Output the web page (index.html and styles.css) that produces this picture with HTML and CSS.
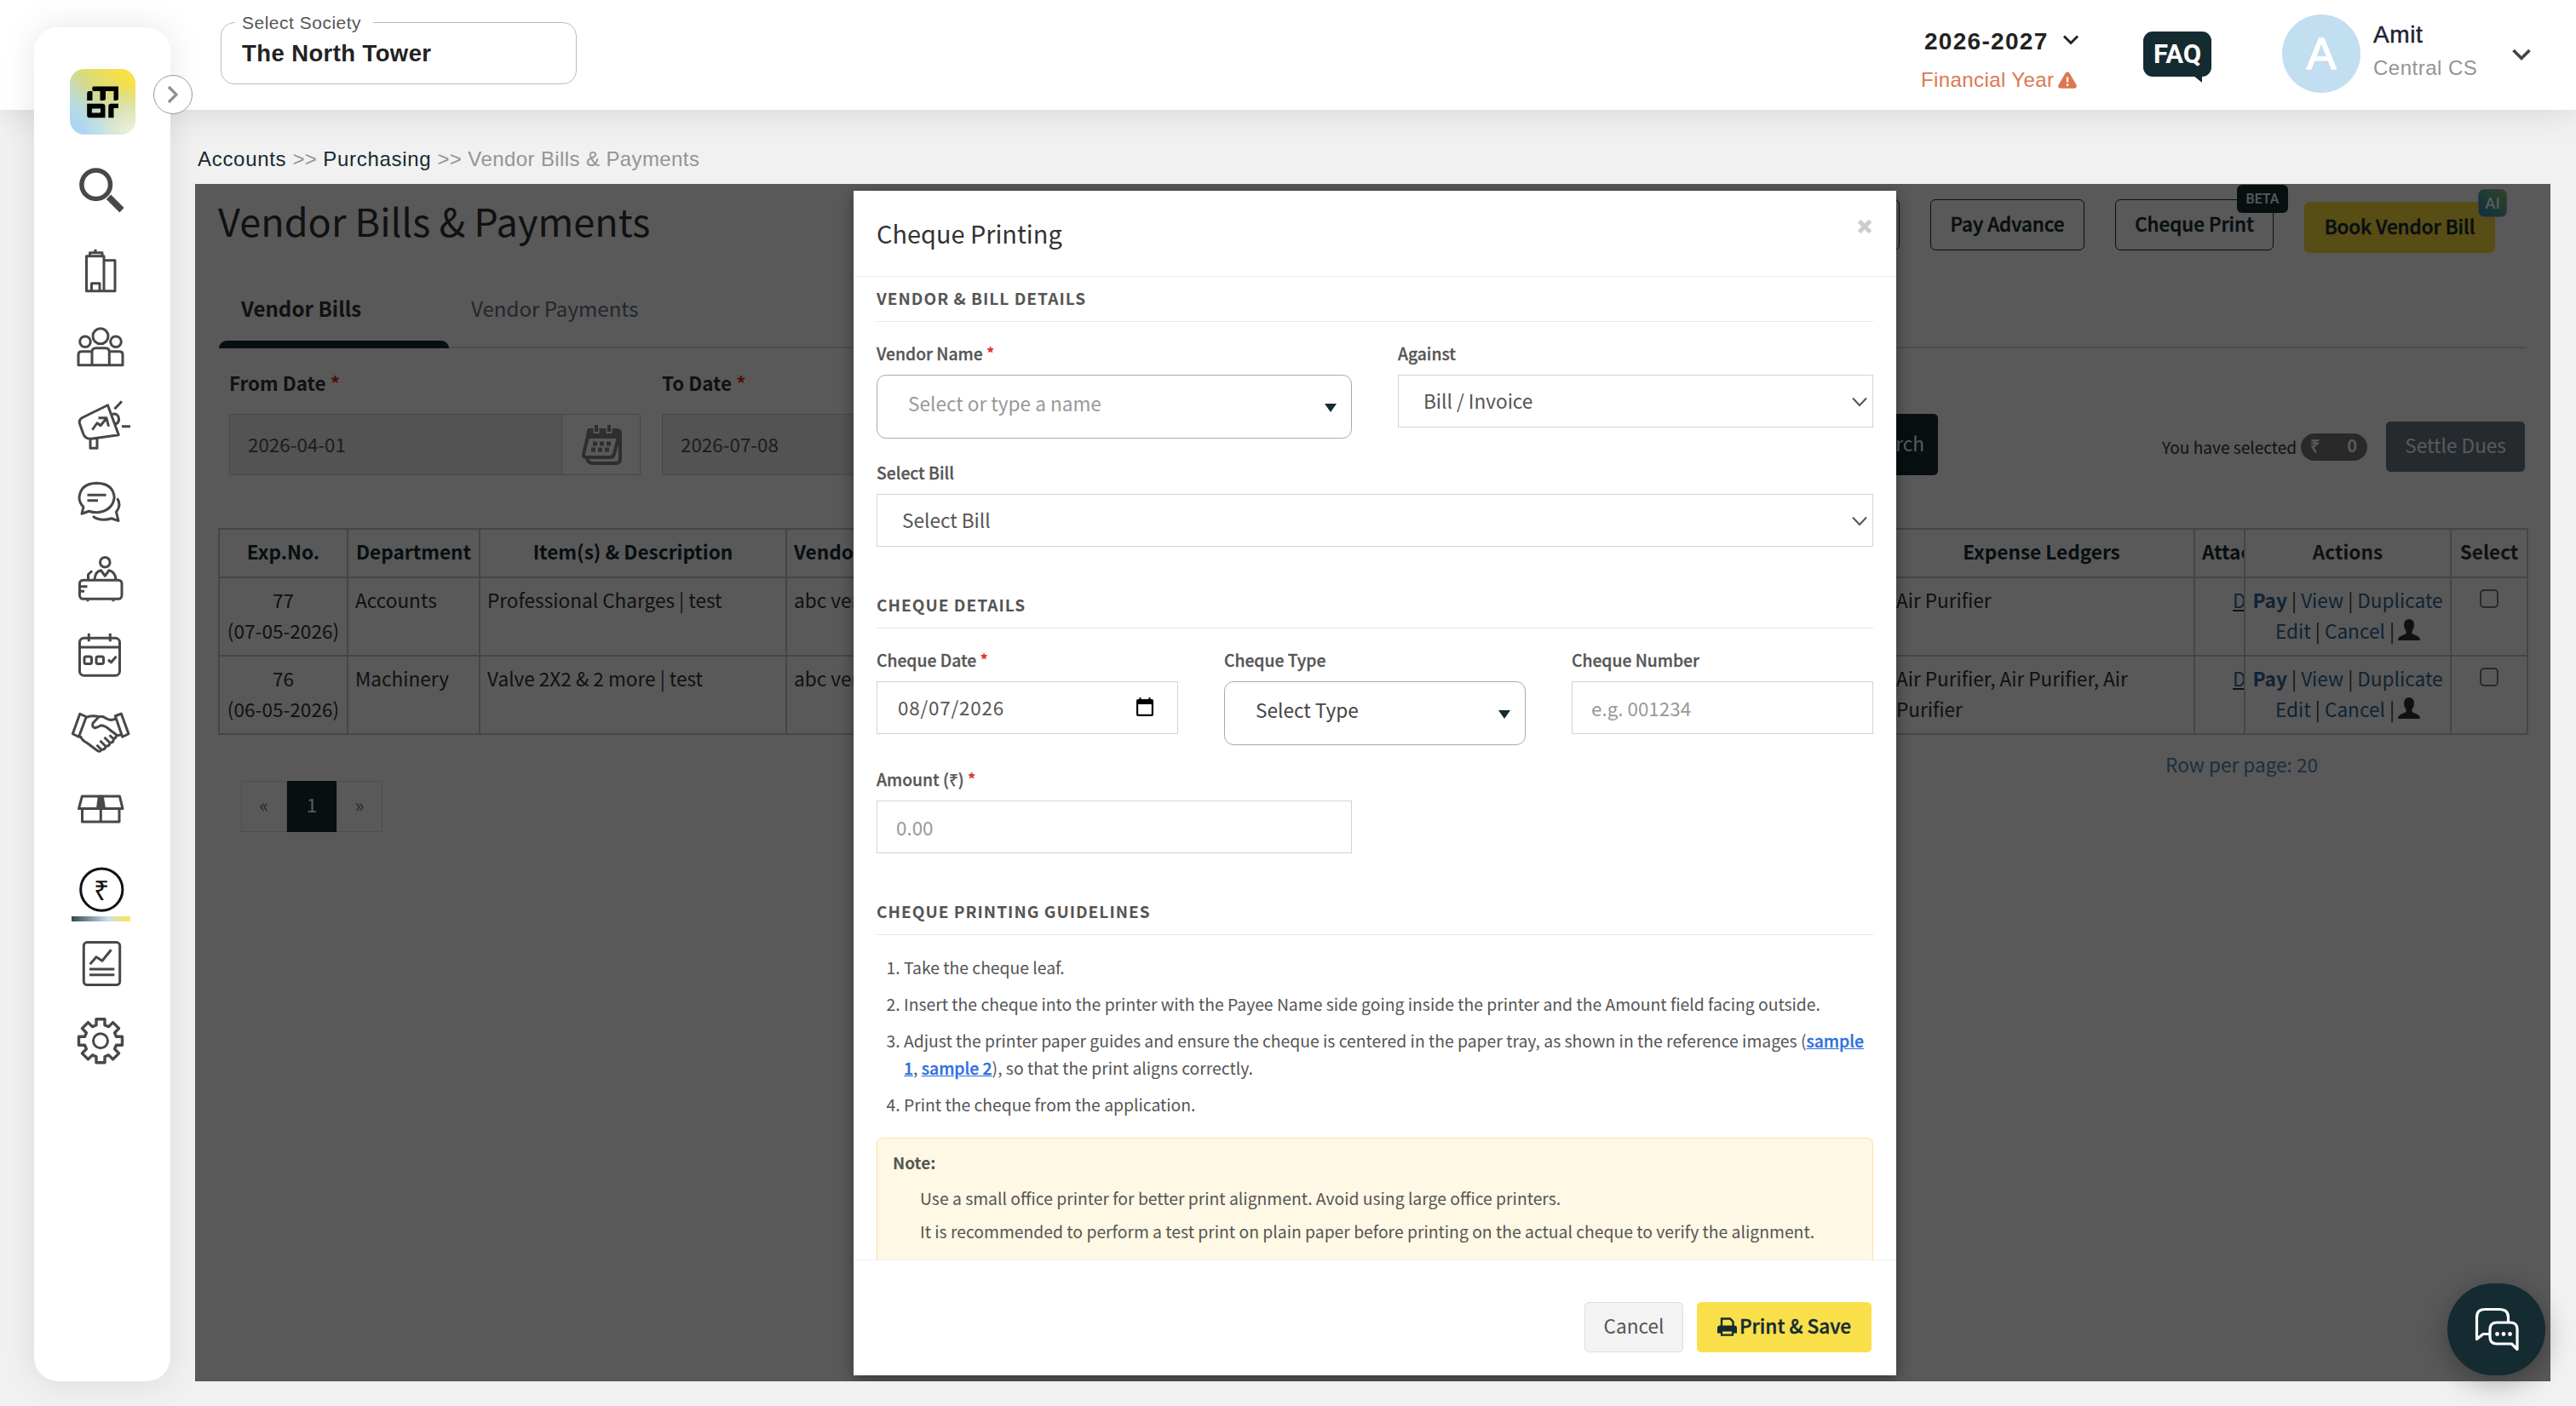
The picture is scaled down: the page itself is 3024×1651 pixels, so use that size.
FILE: index.html
```
<!DOCTYPE html>
<html lang="en">
<head>
  <meta charset="UTF-8">
  <meta name="viewport" content="width=device-width, initial-scale=1.0">
  <title>Vendor Bills &amp; Payments</title>
  <link rel="stylesheet" href="styles.css">
</head>
<body>
  <header class="topbar">
    <fieldset class="society">
      <legend>Select Society</legend>
      <div class="society-name">The North Tower</div>
    </fieldset>
    <div class="topbar-right">
      <div class="year">
        <div class="year-value">2026-2027
          <svg class="year-chevron" width="20" height="12" viewBox="0 0 20 12"><path d="M2 1.5L10 9.5L18 1.5" fill="none" stroke="#222" stroke-width="3"/></svg>
        </div>
        <div class="year-label">Financial Year
          <svg class="year-warn" width="24" height="22" viewBox="0 0 24 22"><path d="M12 1.5Q13.6 1.5 14.6 3.2L22.4 16.6Q24 20.6 20 20.8H4Q0 20.6 1.6 16.6L9.4 3.2Q10.4 1.5 12 1.5Z" fill="#dc7850"/><path d="M12 7.5V13.5M12 15.6V18" stroke="#fff" stroke-width="2.4"/></svg>
        </div>
      </div>
      <div class="faq">FAQ</div>
      <div class="user">
        <div class="avatar">A</div>
        <div class="user-text">
          <div class="user-name">Amit</div>
          <div class="user-role">Central CS</div>
        </div>
        <svg width="24" height="16" viewBox="0 0 24 16"><path d="M2.5 3L12 12.5L21.500 3" fill="none" stroke="#444" stroke-width="3.6"/></svg>
      </div>
    </div>
  </header>

  <nav class="sidebar">
    <svg class="logo" width="77" height="77" viewBox="0 0 77 77">
      <defs>
        <linearGradient id="lg1" x1="0" y1="1" x2="0.9" y2="0"><stop offset="0" stop-color="#a5d4fb"/><stop offset="0.3" stop-color="#b9dbe0"/><stop offset="0.6" stop-color="#d9da7c"/><stop offset="0.9" stop-color="#f7e144"/></linearGradient>
        <radialGradient id="lg2" cx="0.95" cy="1" r="0.75"><stop offset="0" stop-color="#f6f4d8"/><stop offset="0.4" stop-color="#e3edda" stop-opacity="0.7"/><stop offset="1" stop-color="#c5e2fa" stop-opacity="0"/></radialGradient>
      </defs>
      <rect width="77" height="77" rx="17" fill="url(#lg1)"/>
      <rect width="77" height="77" rx="17" fill="url(#lg2)"/>
      <path d="M28 20.500H57V34.500Q57 37 54 37H51.500V26H42V34.500Q42 37 39 37H35.500V26H28Q26.300 26 26.300 24V22Q26.300 20.500 28 20.500Z"/>
      <path d="M23 26H26.500V37H20.200V29Q20.200 26 23 26Z"/>
      <path fill-rule="evenodd" d="M20.200 40.800H38Q41.500 40.800 41.500 44V57.300H23Q20.200 57.300 20.200 54ZM27 46.500Q25.800 46.500 25.800 48V51.500H34.800Q36 51.500 36 50V46.500Z"/>
      <path d="M48.500 40.800H57V46H51.500V57.300H45.300V44Q45.300 40.800 48.500 40.800Z"/>
    </svg>
    <svg class="nav-icon nav-search" viewBox="0 0 80 90"><circle cx="34.700" cy="38.500" r="16.800" stroke-width="5.500"/><path d="M49.500 53L65 68.500" stroke-width="7.500"/></svg>
    <svg class="nav-icon" viewBox="0 0 80 90"><path d="M23.500 28.500H44V69.500H23.500ZM44 33.500H57V69.500H44M27.500 28V24.500H42V28M34 24V20.500M29.500 69V60.500H39V69"/></svg>
    <svg class="nav-icon" viewBox="0 0 80 90"><circle cx="40" cy="32.500" r="9"/><circle cx="22" cy="39" r="6.300"/><circle cx="58" cy="39" r="6.300"/><path d="M30 66.500V51Q30 46.500 34.500 46.500H46Q50.300 46.500 50.300 51V66.500M30 50.500H18Q14 50.500 14 54V66.500H66V54Q66 50.500 62 50.500H50.300"/></svg>
    <svg class="nav-icon" viewBox="0 0 80 90"><path d="M48.500 22.500L61.300 57.400L29 62Q22 62.500 19.500 55.500L16 45.500Q13.500 40 19 37ZM54 33Q60 31.500 61.500 38Q62 43 58 44.500M56.500 27L65 18M65 47.500H75M28 62.500V73H36V61.500M30.300 51.500L36 43.500L40 46.500L47 38M37.500 37.500H47L49.500 47.500"/></svg>
    <svg class="nav-icon" viewBox="0 0 80 90"><path d="M18 60L20 52Q15 47 15 41Q16.500 24.500 35.500 24Q55 24.500 56.200 41Q54 57 35.500 58.500Q30 58.500 26.500 57ZM24.500 38H46.500M24.500 44.500H37M59.500 42Q65 49 58.500 58L61 68.300L53 65.500Q40 69.500 31 63"/></svg>
    <svg class="nav-icon" viewBox="0 0 80 90"><circle cx="45.300" cy="26" r="5.800"/><rect x="15.500" y="47" width="49.500" height="22" rx="4"/><path d="M33 46Q34 36.500 40.500 35.500L45.300 42L50 35.500Q57 37 58 46M25.500 46V40.500L30 36M16 54.500H24.500M16 60H21M25 70V72M55 70V72"/></svg>
    <svg class="nav-icon" viewBox="0 0 80 90"><rect x="15.500" y="25" width="47" height="44" rx="5"/><path d="M15.500 35.800H62.500M26.300 19.500V29M51.300 19.500V29M49 50.500L52.500 53.500L58.500 46.500"/><rect x="21" y="46.700" width="8.500" height="8.500" rx="2"/><rect x="35" y="46.700" width="8.500" height="8.500" rx="2"/></svg>
    <svg class="nav-icon" viewBox="0 0 80 90"><path d="M15.800 23L23.300 26.500L14.500 50L7.300 46.500ZM64.300 22.800L57.300 25.500L65.700 50L73 46.500ZM23.500 27Q31 24.500 38 26.500L31 34Q29.500 38.500 33.500 39.500Q37.500 38.500 40.500 36.500Q46 37 50.500 41.500L58 47Q59.500 50.500 55.500 52.500M38 26.500Q42 25 46 28Q52 32 58.500 28.500M16.300 49Q18 54 24 57L36 66Q39.500 68.500 41 65L35.500 59.500M41 65Q45.500 65.500 46 61L39.500 54.500M46 61Q50.500 61.500 51 57L44.500 50.500M51 57Q55 57 55.500 52.500L50.500 48M58.500 48.500L65 47.500"/></svg>
    <svg class="nav-icon" viewBox="0 0 80 90"><path d="M18.300 29.800H62.500L66 44.300H14.500ZM18.500 44.300V59.700H62V44.300M40.300 44V59.700"/><path d="M38.300 30H42.300L44.500 44H36.500Z" fill="#484848"/></svg>
    <div class="nav-active">
      <svg class="nav-icon" viewBox="0 0 80 90"><circle cx="41.300" cy="45.300" r="24.600" stroke="#111"/><text x="41.300" y="58">₹</text></svg>
    </div>
    <svg class="nav-icon" viewBox="0 0 80 90"><rect x="20.300" y="20.300" width="42.400" height="50" rx="4"/><path d="M27.700 46L35 37.500L42 42L52.500 29M27 51.800H56.300M27 58.500H56.300"/></svg>
    <svg class="nav-icon" viewBox="0 0 80 90"><circle cx="40" cy="45" r="8.500"/><path transform="translate(40 45)" stroke-width="3.400" d="M-5 -25.500H5V-18.500L9.500 -16.600L14.600 -21.600L21.600 -14.600L16.600 -9.500L18.500 -5H25.500V5H18.500L16.600 9.500L21.600 14.600L14.600 21.600L9.500 16.600L5 18.500V25.500H-5V18.500L-9.500 16.600L-14.600 21.600L-21.600 14.600L-16.600 9.500L-18.500 5H-25.500V-5H-18.500L-16.600 -9.500L-21.600 -14.600L-14.600 -21.600L-9.500 -16.600L-5 -18.500Z"/></svg>
    <div class="sidebar-toggle">
      <svg width="14" height="22" viewBox="0 0 14 22"><path d="M2 2L11 11L2 20" fill="none" stroke="#909090" stroke-width="3.200"/></svg>
    </div>
  </nav>

  <main class="main">
    <div class="breadcrumb"><a>Accounts</a> &gt;&gt; <a>Purchasing</a> &gt;&gt; Vendor Bills &amp; Payments</div>

    <section class="panel">
      <div class="toolbar">
        <h1>Vendor Bills &amp; Payments</h1>
        <div class="toolbar-buttons">
          <div class="btn btn-wide"></div>
          <div class="btn">Pay Advance</div>
          <div class="btn btn-cheque">Cheque Print<span class="badge-beta">BETA</span></div>
          <div class="btn btn-book">Book Vendor Bill<span class="badge-ai">AI</span></div>
        </div>
      </div>

      <div class="tabs">
        <div class="tab tab-active">Vendor Bills</div>
        <div class="tab">Vendor Payments</div>
      </div>

      <div class="filters">
        <div class="filter">
          <label>From Date <span class="req">*</span></label>
          <div class="date-field">
            <span>2026-04-01</span>
            <div class="date-addon">
              <svg width="50" height="50" viewBox="0 0 50 50"><path d="M10 8H44Q48 8 48 12V42Q48 47 43 47H16Q10 47 9 41" fill="none" stroke="#848484" stroke-width="4"/><path d="M10 16L5 36Q4 40 8 40H36Q40 40 41 36L46 16Z" fill="#fff" stroke="#848484" stroke-width="4"/><path d="M9 8H47V17H8Z" fill="#848484"/><path d="M20 3V12M35 3V12" stroke="#fff" stroke-width="7"/><path d="M20 2V10M35 2V10" stroke="#848484" stroke-width="4"/><path d="M16 24H21M24 24H29M32 24H37M14 31H19M22 31H27M30 31H35" stroke="#848484" stroke-width="5"/></svg>
            </div>
          </div>
        </div>
        <div class="filter">
          <label>To Date <span class="req">*</span></label>
          <div class="date-field"><span>2026-07-08</span></div>
        </div>
        <div class="search-btn">Search</div>
        <div class="selected">You have selected <span class="pill"><b>₹</b><b>0</b></span></div>
        <div class="settle-btn">Settle Dues</div>
      </div>

      <table class="bills">
        <colgroup>
          <col class="c-exp"><col class="c-dept"><col class="c-item"><col class="c-vendor"><col class="c-ledger"><col class="c-att"><col class="c-act"><col class="c-sel">
        </colgroup>
        <thead>
          <tr>
            <th>Exp.No.</th><th>Department</th><th>Item(s) &amp; Description</th><th class="left">Vendor Name</th><th>Expense Ledgers</th><th class="left">Attachments</th><th class="plain">Actions</th><th class="plain">Select</th>
          </tr>
        </thead>
        <tbody>
          <tr>
            <td class="center">77<br>(07-05-2026)</td><td>Accounts</td><td>Professional Charges | test</td><td>abc vendor</td><td>Air Purifier</td>
            <td class="download"><a>Download</a></td>
            <td class="actions"><a><b>Pay</b></a> | <a>View</a> | <a>Duplicate</a><br><a>Edit</a> | <a>Cancel</a> | <svg width="26" height="26" viewBox="0 0 26 26"><path d="M13 0C17 0 19 3 19 7Q19 11 16.500 14V17L24 20.500Q26 22 26 25H0Q0 22 2 20.500L9.500 17V14Q7 11 7 7C7 3 9 0 13 0Z" fill="#333"/></svg></td>
            <td class="center"><span class="check"></span></td>
          </tr>
          <tr>
            <td class="center">76<br>(06-05-2026)</td><td>Machinery</td><td>Valve 2X2 &amp; 2 more | test</td><td>abc vendor</td><td>Air Purifier, Air Purifier, Air<br>Purifier</td>
            <td class="download"><a>Download</a></td>
            <td class="actions"><a><b>Pay</b></a> | <a>View</a> | <a>Duplicate</a><br><a>Edit</a> | <a>Cancel</a> | <svg width="26" height="26" viewBox="0 0 26 26"><path d="M13 0C17 0 19 3 19 7Q19 11 16.500 14V17L24 20.500Q26 22 26 25H0Q0 22 2 20.500L9.500 17V14Q7 11 7 7C7 3 9 0 13 0Z" fill="#333"/></svg></td>
            <td class="center"><span class="check"></span></td>
          </tr>
        </tbody>
      </table>

      <div class="table-footer">
        <div class="pagination"><span>«</span><span class="current">1</span><span>»</span></div>
        <div class="per-page">Row per page: 20</div>
      </div>

      <div class="backdrop">
        <div class="modal">
          <div class="modal-header">
            <h2>Cheque Printing</h2>
            <svg width="18" height="18" viewBox="0 0 18 18"><path d="M2.500 2.500L15.500 15.500M15.500 2.500L2.500 15.500" stroke="#ccc" stroke-width="5"/></svg>
          </div>

          <div class="modal-body">
            <h3>VENDOR &amp; BILL DETAILS</h3>
            <div class="grid two">
              <div class="field">
                <label>Vendor Name <span class="req">*</span></label>
                <div class="combo placeholder">Select or type a name<i class="caret"></i></div>
              </div>
              <div class="field">
                <label>Against</label>
                <div class="select">Bill / Invoice<svg width="18" height="12" viewBox="0 0 18 12"><path d="M1 1.500L9 10L17 1.500" fill="none" stroke="#555" stroke-width="2"/></svg></div>
              </div>
            </div>
            <div class="grid">
              <div class="field">
                <label>Select Bill</label>
                <div class="select">Select Bill<svg width="18" height="12" viewBox="0 0 18 12"><path d="M1 1.500L9 10L17 1.500" fill="none" stroke="#555" stroke-width="2"/></svg></div>
              </div>
            </div>

            <h3 class="next">CHEQUE DETAILS</h3>
            <div class="grid three">
              <div class="field">
                <label>Cheque Date <span class="req">*</span></label>
                <div class="input date">08/07/2026<svg width="20" height="22" viewBox="0 0 20 22"><path d="M2 2H18Q20 2 20 4V20Q20 22 18 22H2Q0 22 0 20V4Q0 2 2 2ZM2.200 8V19.800H17.800V8Z" fill-rule="evenodd"/><path d="M4.500 0V3M15.500 0V3" stroke="#000" stroke-width="2"/></svg></div>
              </div>
              <div class="field">
                <label>Cheque Type</label>
                <div class="combo">Select Type<i class="caret"></i></div>
              </div>
              <div class="field">
                <label>Cheque Number</label>
                <input class="input" type="text" placeholder="e.g. 001234">
              </div>
            </div>
            <div class="grid two">
              <div class="field">
                <label>Amount (₹) <span class="req">*</span></label>
                <input class="input" type="text" placeholder="0.00">
              </div>
            </div>

            <h3 class="next">CHEQUE PRINTING GUIDELINES</h3>
            <ol class="steps">
              <li>Take the cheque leaf.</li>
              <li>Insert the cheque into the printer with the Payee Name side going inside the printer and the Amount field facing outside.</li>
              <li>Adjust the printer paper guides and ensure the cheque is centered in the paper tray, as shown in the reference images (<a>sample 1</a>, <a>sample 2</a>), so that the print aligns correctly.</li>
              <li>Print the cheque from the application.</li>
            </ol>
            <div class="note">
              <b>Note:</b>
              <p>Use a small office printer for better print alignment. Avoid using large office printers.</p>
              <p>It is recommended to perform a test print on plain paper before printing on the actual cheque to verify the alignment.</p>
            </div>
          </div>

          <div class="modal-footer">
            <div class="cancel-btn">Cancel</div>
            <div class="print-btn">
              <svg width="23" height="22" viewBox="0 0 23 22"><path d="M5 11V1.500H15L18.500 5V11" fill="none" stroke="#152b32" stroke-width="2.400"/><path d="M3 9.500H20Q23 9.500 23 12.500V18.500H0V12.500Q0 9.500 3 9.500Z" fill="#152b32"/><path d="M5 15.500H18V20.700H5Z" fill="#f9e04b" stroke="#152b32" stroke-width="2.200"/></svg>
              Print &amp; Save
            </div>
          </div>
        </div>
      </div>
    </section>
  </main>

  <div class="chat-btn">
    <svg width="52" height="52" viewBox="0 0 52 52"><path d="M17 31.500H10L2.500 37.500V12Q2.500 2.500 12 2.500H29Q39.500 2.500 39.500 12V17M26 18H42Q50 18 50 26V49.500L43.500 43H26Q18 43 18 35V26Q18 18 26 18Z" fill="none" stroke="#fff" stroke-width="3.200" stroke-linejoin="round"/><circle cx="26.500" cy="31.500" r="2.400" fill="#fff"/><circle cx="34" cy="31.500" r="2.400" fill="#fff"/><circle cx="41.500" cy="31.500" r="2.400" fill="#fff"/></svg>
  </div>
</body>
</html>
```
FILE: styles.css
```
* {
  box-sizing: border-box;
}
body {
  margin: 0;
  height: 1651px;
  overflow: hidden;
  background-color: #f1f1f1;
  font-family: "Noto Sans CJK SC", "Open Sans", sans-serif;
  font-size: 22.6px;
  color: #333;
}
h1, h2, h3, p {
  margin: 0;
  font-weight: 400;
}
.req {
  color: #d9302c;
}

/* top bar */
.topbar {
  position: relative;
  height: 129px;
  padding: 14px 52px 0 259px;
  background-color: #fff;
  box-shadow: 0 4px 36px rgba(0,0,0,0.1);
  display: flex;
  justify-content: space-between;
  align-items: flex-start;
  font-family: "Liberation Sans", Arial, sans-serif;
}
.society {
  width: 418px;
  height: 85px;
  margin: 0;
  padding: 0 0 0 24px;
  border: 1.5px solid #bcbcbc;
  border-radius: 16px;
}
.society legend {
  margin-left: -8px;
  padding: 0 14px 0 8px;
  font-size: 21px;
  line-height: 25px;
  letter-spacing: 0.5px;
  color: #555;
}
.society-name {
  margin-top: 7px;
  font-size: 27.5px;
  line-height: 34px;
  font-weight: bold;
  letter-spacing: 0.4px;
  color: #222;
}
.topbar-right {
  display: flex;
}
.year {
  width: 261px;
  padding-top: 17px;
}
.year-value {
  padding-left: 4px;
  font-size: 28px;
  line-height: 36px;
  font-weight: bold;
  letter-spacing: 1.3px;
  color: #222;
}
.year-chevron {
  margin-left: 7px;
  vertical-align: 5px;
}
.year-label {
  margin-top: 9px;
  font-size: 24px;
  line-height: 36px;
  letter-spacing: 0.4px;
  color: #dc7850;
}
.year-warn {
  margin-left: -3px;
  vertical-align: -3px;
}
.faq {
  position: relative;
  width: 80px;
  height: 53px;
  margin-top: 23px;
  border-radius: 11px;
  background-color: #152b32;
  color: #fff;
  font-family: Roboto, sans-serif;
  font-size: 31px;
  font-weight: 700;
  line-height: 54px;
  text-align: center;
}
.faq::after {
  content: "";
  position: absolute;
  right: 11px;
  bottom: -7px;
  border-top: 8px solid #152b32;
  border-left: 10px solid transparent;
}
.user {
  display: flex;
  margin: 3px 0 0 83px;
}
.avatar {
  width: 92px;
  height: 92px;
  border-radius: 50%;
  background-color: #c2def1;
  color: #fff;
  font-size: 52px;
  line-height: 93px;
  text-align: center;
  -webkit-text-stroke: 1.4px #fff;
}
.user-text {
  width: 177px;
  padding: 6px 0 0 15px;
}
.user-name {
  font-size: 28px;
  line-height: 36px;
  letter-spacing: 0.6px;
  color: #1c2239;
  -webkit-text-stroke: 0.5px #1c2239;
}
.user-role {
  margin-top: 4px;
  font-size: 24px;
  line-height: 34px;
  letter-spacing: 0.5px;
  color: #949494;
}
.user > svg {
  margin-top: 39px;
}

/* sidebar sits over the top bar */
.sidebar {
  position: absolute;
  left: 40px;
  top: 32px;
  width: 160px;
  height: 1590px;
  padding: 49px 4px 0 0;
  border-radius: 28px;
  background-color: #fff;
  box-shadow: 0 0 40px rgba(0,0,0,0.1);
  display: flex;
  flex-direction: column;
  align-items: center;
}
.logo {
  flex: none;
  margin: 0 0 20px 4px;
}
.nav-icon {
  display: block;
  flex: none;
  width: 80px;
  height: 90.5px;
  fill: none;
  stroke: #484848;
  stroke-width: 3px;
  stroke-linejoin: round;
}
.nav-search {
  margin-bottom: 3px;
}
.nav-icon text {
  font-size: 32px;
  fill: #111;
  stroke: none;
  text-anchor: middle;
}
.nav-active {
  position: relative;
  margin: 3px 0 -3px;
  height: 90.5px;
}
.nav-active::after {
  content: "";
  position: absolute;
  left: 6px;
  bottom: 7px;
  width: 69px;
  height: 6px;
  background: linear-gradient(90deg, #34474d, #c9dff0 62%, #e8e283 82%, #fae361);
}
.sidebar-toggle {
  position: absolute;
  left: 140px;
  top: 56px;
  width: 46px;
  height: 46px;
  border: 1.5px solid #999;
  border-radius: 50%;
  background-color: #fff;
  display: flex;
  align-items: center;
  justify-content: center;
}

/* page */
.main {
  padding: 37px 30px 0 229px;
}
.breadcrumb {
  height: 50px;
  padding-left: 3px;
  font-family: "Liberation Sans", Arial, sans-serif;
  font-size: 24px;
  line-height: 42px;
  letter-spacing: 0.4px;
  color: #949494;
}
.breadcrumb a {
  letter-spacing: 0.7px;
  color: #152b32;
}
.panel {
  position: relative;
  height: 1406px;
  padding: 0 28px;
  background-color: #fff;
  overflow: hidden;
}
.toolbar {
  display: flex;
  justify-content: space-between;
  height: 110px;
  padding: 18px 37px 0 0;
}
.toolbar h1 {
  margin-left: -1px;
  font-size: 45.1px;
  line-height: 50px;
}
.toolbar-buttons {
  display: flex;
  align-items: flex-start;
  gap: 36px;
}
.btn {
  position: relative;
  width: 181px;
  height: 60px;
  border: 1.5px solid #152b32;
  border-radius: 6px;
  font-size: 22.4px;
  font-weight: 500;
  line-height: 55px;
  text-align: center;
  color: #152b32;
  -webkit-text-stroke: 0.5px #152b32;
}
.btn-cheque {
  width: 186px;
}
.btn-book {
  width: 224px;
  margin-top: 3px;
  border-color: #f9dc3e;
  background-color: #f9dc3e;
}
.badge-beta {
  position: absolute;
  left: 142px;
  top: -18px;
  width: 60px;
  height: 33px;
  border-radius: 6px;
  background-color: #152b32;
  color: #fff;
  font-family: Roboto, sans-serif;
  font-size: 16px;
  line-height: 34px;
  -webkit-text-stroke: 0;
}
.badge-ai {
  position: absolute;
  left: 203px;
  top: -16px;
  width: 34px;
  height: 33px;
  border: 1px solid #aac;
  border-radius: 7px;
  background: linear-gradient(40deg, #3e80c0, #4fa894 50%, #94c070);
  color: #fff;
  font-family: Roboto, sans-serif;
  font-size: 19px;
  line-height: 32px;
  -webkit-text-stroke: 0;
}
.tabs {
  display: flex;
  height: 83px;
  box-shadow: inset 0 -1.5px 0 #d0d0d0;
}
.tab {
  width: 270px;
  padding-left: 26px;
  font-size: 24.1px;
  line-height: 71px;
  color: #667080;
}
.tab-active {
  font-weight: 700;
  color: #333;
}
.tab-active::after {
  content: "";
  display: block;
  height: 9px;
  margin: 3px 0 0 -26px;
  border-radius: 9px 9px 0 0;
  background-color: #152b32;
}
.filters {
  display: flex;
  align-items: flex-end;
  height: 149px;
  padding-left: 12px;
}
.filter {
  width: 483px;
  margin-right: 25px;
}
.filter label {
  display: block;
  height: 50px;
  font-size: 22.4px;
  font-weight: 700;
  line-height: 26px;
}
.date-field {
  display: flex;
  justify-content: space-between;
  height: 72px;
  padding-left: 21px;
  border: 1px solid #ccc;
  background-color: #eee;
  font-size: 22.4px;
  line-height: 68px;
  color: #555;
}
.date-addon {
  width: 92px;
  border-left: 1px solid #ccc;
  background-color: #fff;
  line-height: 0;
  padding: 10px 0 0 20px;
}
.search-btn {
  width: 140px;
  height: 72px;
  margin-left: 850px;
  border-radius: 5px;
  padding-right: 16px;
  background-color: #152b32;
  color: #fff;
  line-height: 70px;
  text-align: right;
}
.selected {
  display: flex;
  align-items: center;
  gap: 5px;
  margin-left: 263px;
  height: 67px;
  font-size: 19.1px;
  white-space: nowrap;
}
.pill {
  display: flex;
  justify-content: space-between;
  width: 78px;
  height: 32px;
  padding: 0 12px 0 11px;
  border-radius: 16px;
  background-color: #777;
  color: #fff;
  font-size: 20px;
  line-height: 28px;
}
.settle-btn {
  width: 163px;
  height: 59px;
  margin: 0 0 4px 22px;
  border-radius: 5px;
  background-color: #6c7a83;
  color: #fff;
  line-height: 56px;
  text-align: center;
}
.bills {
  width: 2710px;
  margin: 62px 0 0 -1px;
  table-layout: fixed;
  border-collapse: collapse;
}
.bills th, .bills td {
  border: 2px solid #c6c6c6;
  padding: 8px 8px 0;
  overflow: hidden;
  text-align: left;
  vertical-align: top;
  white-space: nowrap;
  line-height: 36px;
}
.bills th {
  height: 57px;
  text-align: center;
  font-weight: 700;
  color: #152b32;
}
.bills th.left {
  text-align: left;
}
.bills th.plain {
  color: #333;
}
.bills td {
  height: 92px;
}
.bills .center, .bills .actions {
  text-align: center;
}
.bills td.download {
  padding-left: 44px;
  text-decoration: underline;
}
.bills a {
  color: #2f6496;
}
.actions svg {
  vertical-align: -3px;
  margin-left: -1px;
}
.check {
  display: inline-block;
  width: 22px;
  height: 22px;
  border: 2px solid #767676;
  border-radius: 5px;
}
.c-exp { width: 151px; }
.c-dept { width: 155px; }
.c-item { width: 360px; }
.c-vendor { width: 1294px; }
.c-ledger { width: 359px; }
.c-att { width: 59px; }
.c-act { width: 242px; }
.c-sel { width: 90px; }
.table-footer {
  display: flex;
  justify-content: space-between;
  padding: 19px 245px 0 26px;
}
.pagination {
  display: flex;
  margin-top: 35px;
}
.pagination span {
  width: 54px;
  height: 60px;
  border: 1px solid #ddd;
  line-height: 54px;
  text-align: center;
  color: #777;
}
.pagination .current {
  width: 58px;
  border-color: #152b32;
  background-color: #152b32;
  color: #fff;
}
.per-page {
  line-height: 32px;
  color: #5687b5;
}

/* cheque printing dialog */
.backdrop {
  position: absolute;
  inset: 0;
  padding: 8px 0 0 773px;
  background-color: rgba(0,0,0,0.65);
}
.modal {
  width: 1224px;
  height: 1391px;
  background-color: #fff;
  box-shadow: 0 4px 16px rgba(0,0,0,0.4);
  color: #555;
  display: flex;
  flex-direction: column;
}
.modal-header {
  display: flex;
  justify-content: space-between;
  height: 101px;
  padding: 30px 28px 0 27px;
  border-bottom: 1px solid #eee;
}
.modal-header h2 {
  font-size: 28.9px;
  line-height: 38px;
  color: #333;
}
.modal-header svg {
  margin-top: 3px;
}
.modal-body {
  height: 1154px;
  padding: 10px 27px 0;
  overflow: hidden;
}
.modal-body h3 {
  height: 43px;
  margin-bottom: 25px;
  border-bottom: 1.5px solid #e6e6e6;
  font-size: 19.1px;
  font-weight: 700;
  line-height: 30px;
  letter-spacing: 1px;
}
.modal-body h3.next {
  margin-top: 25px;
}
.grid {
  display: grid;
  column-gap: 54px;
}
.two {
  grid-template-columns: 558px 558px;
}
.three {
  grid-template-columns: 354px 354px 354px;
}
.field {
  margin-bottom: 28px;
}
.field label {
  display: block;
  height: 37px;
  font-size: 19.3px;
  font-weight: 500;
  line-height: 25px;
  -webkit-text-stroke: 0.3px;
}
.combo {
  display: flex;
  justify-content: space-between;
  height: 75px;
  padding: 0 17px 0 36px;
  border: 1.5px solid #aaa;
  border-radius: 11px;
  line-height: 66px;
  color: #444;
}
.combo.placeholder {
  color: #999;
}
.caret {
  height: 9px;
  margin-top: 33px;
  border-top: 10px solid #152b32;
  border-left: 7px solid transparent;
  border-right: 7px solid transparent;
}
.select, .input {
  display: flex;
  justify-content: space-between;
  width: 100%;
  height: 62px;
  padding: 0 6px 0 29px;
  border: 1.5px solid #d2d2da;
  line-height: 60px;
}
.select svg {
  margin-top: 25px;
}
.input {
  padding: 0 28px 0 22px;
  font-family: inherit;
  font-size: 22.4px;
  line-height: 58px;
  outline: none;
}
.input::placeholder {
  color: #999;
}
.date {
  padding-left: 24px;
  letter-spacing: 0.8px;
}
.date svg {
  margin-top: 18px;
}
.steps {
  margin: -3px 0 0;
  padding-left: 32px;
  font-size: 19.33px;
  line-height: 32px;
}
.steps li {
  margin-bottom: 11px;
}
.steps a {
  color: #2f6fe0;
  font-weight: 500;
  text-decoration: underline;
  -webkit-text-stroke: 0.3px;
}
.note {
  height: 180px;
  margin-top: 23px;
  padding: 13px 18px;
  border: 1.5px solid #fae0a8;
  border-radius: 7px;
  background-color: #fff8e4;
  font-size: 19.33px;
  line-height: 32px;
}
.note b {
  display: block;
  margin-bottom: 11px;
  font-size: 19px;
  line-height: 30px;
}
.note p {
  margin: 0 0 7px 32px;
}
.modal-footer {
  flex: 1;
  display: flex;
  justify-content: flex-end;
  gap: 16px;
  padding: 49px 29px 0 0;
  border-top: 1px solid #eee;
}
.cancel-btn, .print-btn {
  width: 116px;
  height: 59px;
  border: 1.5px solid #ddd;
  border-radius: 5px;
  background-color: #f3f3f3;
  line-height: 54px;
  text-align: center;
}
.print-btn {
  width: 205px;
  border-color: #f9e04b;
  background-color: #f9e04b;
  color: #152b32;
  font-weight: 500;
  -webkit-text-stroke: 0.4px;
}
.print-btn svg {
  vertical-align: -3px;
  margin-right: -2px;
}

.chat-btn {
  position: absolute;
  left: 2873px;
  top: 1507px;
  width: 115px;
  height: 108px;
  border-radius: 54px;
  background-color: #152b32;
  box-shadow: 0 8px 32px rgba(0,0,0,0.3);
  display: flex;
  align-items: center;
  justify-content: center;
}
```
